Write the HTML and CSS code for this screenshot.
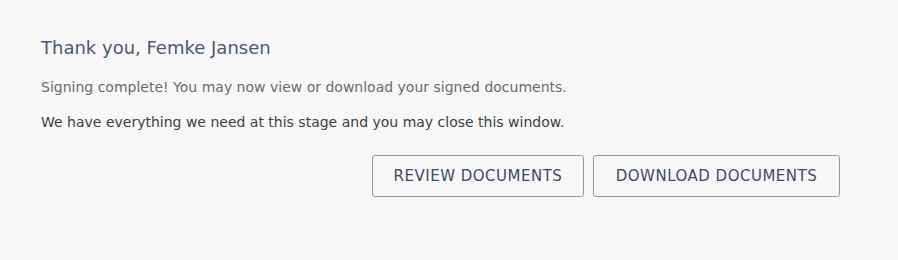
FILE: index.html
```html
<!DOCTYPE html>
<html>
<head>
<meta charset="utf-8">
<link rel="stylesheet" href="styles.css">
</head>
<body>
<div class="panel">
  <h1 class="title">Thank you, Femke Jansen</h1>
  <p class="msg">Signing complete! You may now view or download your signed documents.</p>
  <p class="msg strong">We have everything we need at this stage and you may close this window.</p>
  <div class="actions">
    <button class="btn review">REVIEW DOCUMENTS</button>
    <button class="btn download">DOWNLOAD DOCUMENTS</button>
  </div>
</div>
</body>
</html>
```
FILE: styles.css
```css
html, body {
  margin: 0;
  padding: 0;
  background: #f8f8f8;
}
body {
  font-family: "DejaVu Sans", sans-serif;
}
.panel {
  width: 799px;
  padding: 36px 0 0 41px;
}
.title {
  margin: 0;
  font-size: 18px;
  font-weight: 400;
  line-height: 24px;
  color: #4b5a73;
}
.msg {
  margin: 17px 0 0;
  font-size: 14px;
  line-height: 20px;
  color: #6b6b6b;
}
.msg.strong {
  margin-top: 15px;
  color: #3e3e3e;
  font-weight: 500;
}
.actions {
  display: flex;
  justify-content: flex-end;
  gap: 9px;
  margin-top: 23px;
}
.btn {
  height: 42px;
  box-sizing: border-box;
  border: 1px solid #8c9bb3;
  border-radius: 3px;
  background: #f8f8f8;
  color: #3d4a66;
  font-family: inherit;
  font-size: 15px;
  letter-spacing: 0.5px;
  padding: 0;
}
.review { width: 212px; }
.download { width: 247px; }
```
